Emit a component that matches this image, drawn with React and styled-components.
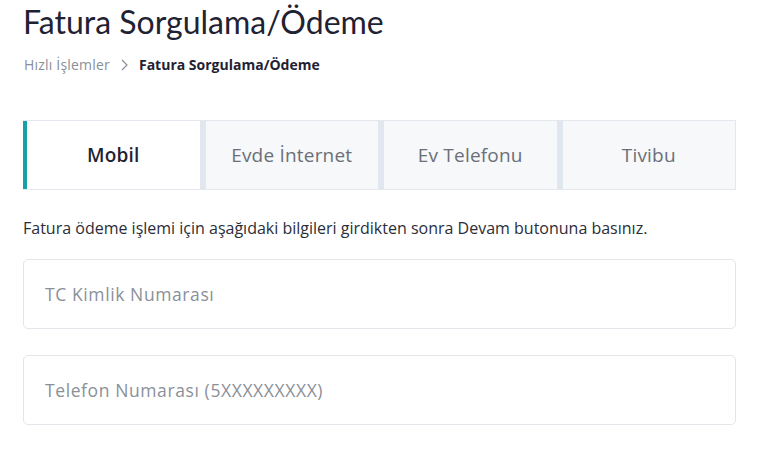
import React from "react";
import styled, { createGlobalStyle } from "styled-components";

const sans = `"Open Sans", "Liberation Sans", sans-serif`;

const Global = createGlobalStyle`
  html, body {
    margin: 0;
    padding: 0;
    background: #fff;
    font-family: ${sans};
  }
`;

const Page = styled.div`
  width: 713px;
  padding: 0 0 0 23px;
`;

const Title = styled.h1`
  margin: 0;
  padding-top: 2px;
  font-family: Lato, "Liberation Sans", sans-serif;
  font-size: 32px;
  line-height: 40px;
  font-weight: 400;
  color: #1f2233;
`;

const Crumbs = styled.nav`
  display: flex;
  align-items: center;
  gap: 10px;
  margin-top: 13px;
  font-size: 14px;
  line-height: 20px;
`;

const CrumbLink = styled.span`
  color: #8a8f98;
  padding-left: 1px;
  letter-spacing: 0.2px;
`;

const CrumbCurrent = styled.span`
  color: #1f2233;
  font-weight: 700;
`;

const Chevron = () => (
  <svg width="9" height="12" viewBox="0 0 9 12" fill="none">
    <path d="M2 1l5 5-5 5" stroke="#8a8f98" strokeWidth="1.2" />
  </svg>
);

const Tabs = styled.div`
  display: flex;
  margin-top: 45px;
  height: 68px;
  border: 1px solid #e4e8ee;
  background: #f7f8fa;
`;

const Tab = styled.button`
  flex: 1;
  border: none;
  border-left: ${(p) => (p.$active ? "4px solid #17a0a6" : "6px solid #e1e7ee")};
  margin-left: ${(p) => (p.$first ? "-1px" : "0")};
  background: ${(p) => (p.$active ? "#fff" : "#f7f8fa")};
  color: ${(p) => (p.$active ? "#1f2233" : "#6b6f78")};
  font-family: ${sans};
  font-size: 19px;
  letter-spacing: 0.2px;
  font-weight: ${(p) => (p.$active ? 600 : 400)};
  cursor: pointer;
  padding: 0;
`;

const Note = styled.p`
  margin: 27px 0 0;
  font-size: 16px;
  line-height: 22px;
  color: #2b2e38;
`;

const Field = styled.input`
  display: block;
  box-sizing: border-box;
  width: 713px;
  height: 70px;
  margin-top: ${(p) => p.$gap}px;
  padding: 0 21px;
  border: 1px solid #e2e5ea;
  border-radius: 5px;
  font-family: ${sans};
  font-size: 17.5px;
  letter-spacing: 0.6px;
  color: #1f2233;
  outline: none;
  &::placeholder {
    color: #8a9099;
  }
`;

const tabs = ["Mobil", "Evde İnternet", "Ev Telefonu", "Tivibu"];

export default function App() {
  return (
    <Page>
      <Global />
      <Title>Fatura Sorgulama/Ödeme</Title>
      <Crumbs>
        <CrumbLink>Hızlı İşlemler</CrumbLink>
        <Chevron />
        <CrumbCurrent>Fatura Sorgulama/Ödeme</CrumbCurrent>
      </Crumbs>
      <Tabs>
        {tabs.map((t, i) => (
          <Tab key={t} $active={i === 0} $first={i === 0}>
            {t}
          </Tab>
        ))}
      </Tabs>
      <Note>
        Fatura ödeme işlemi için aşağıdaki bilgileri girdikten sonra Devam butonuna basınız.
      </Note>
      <Field $gap={20} placeholder="TC Kimlik Numarası" />
      <Field $gap={26} placeholder="Telefon Numarası (5XXXXXXXXX)" />
    </Page>
  );
}
